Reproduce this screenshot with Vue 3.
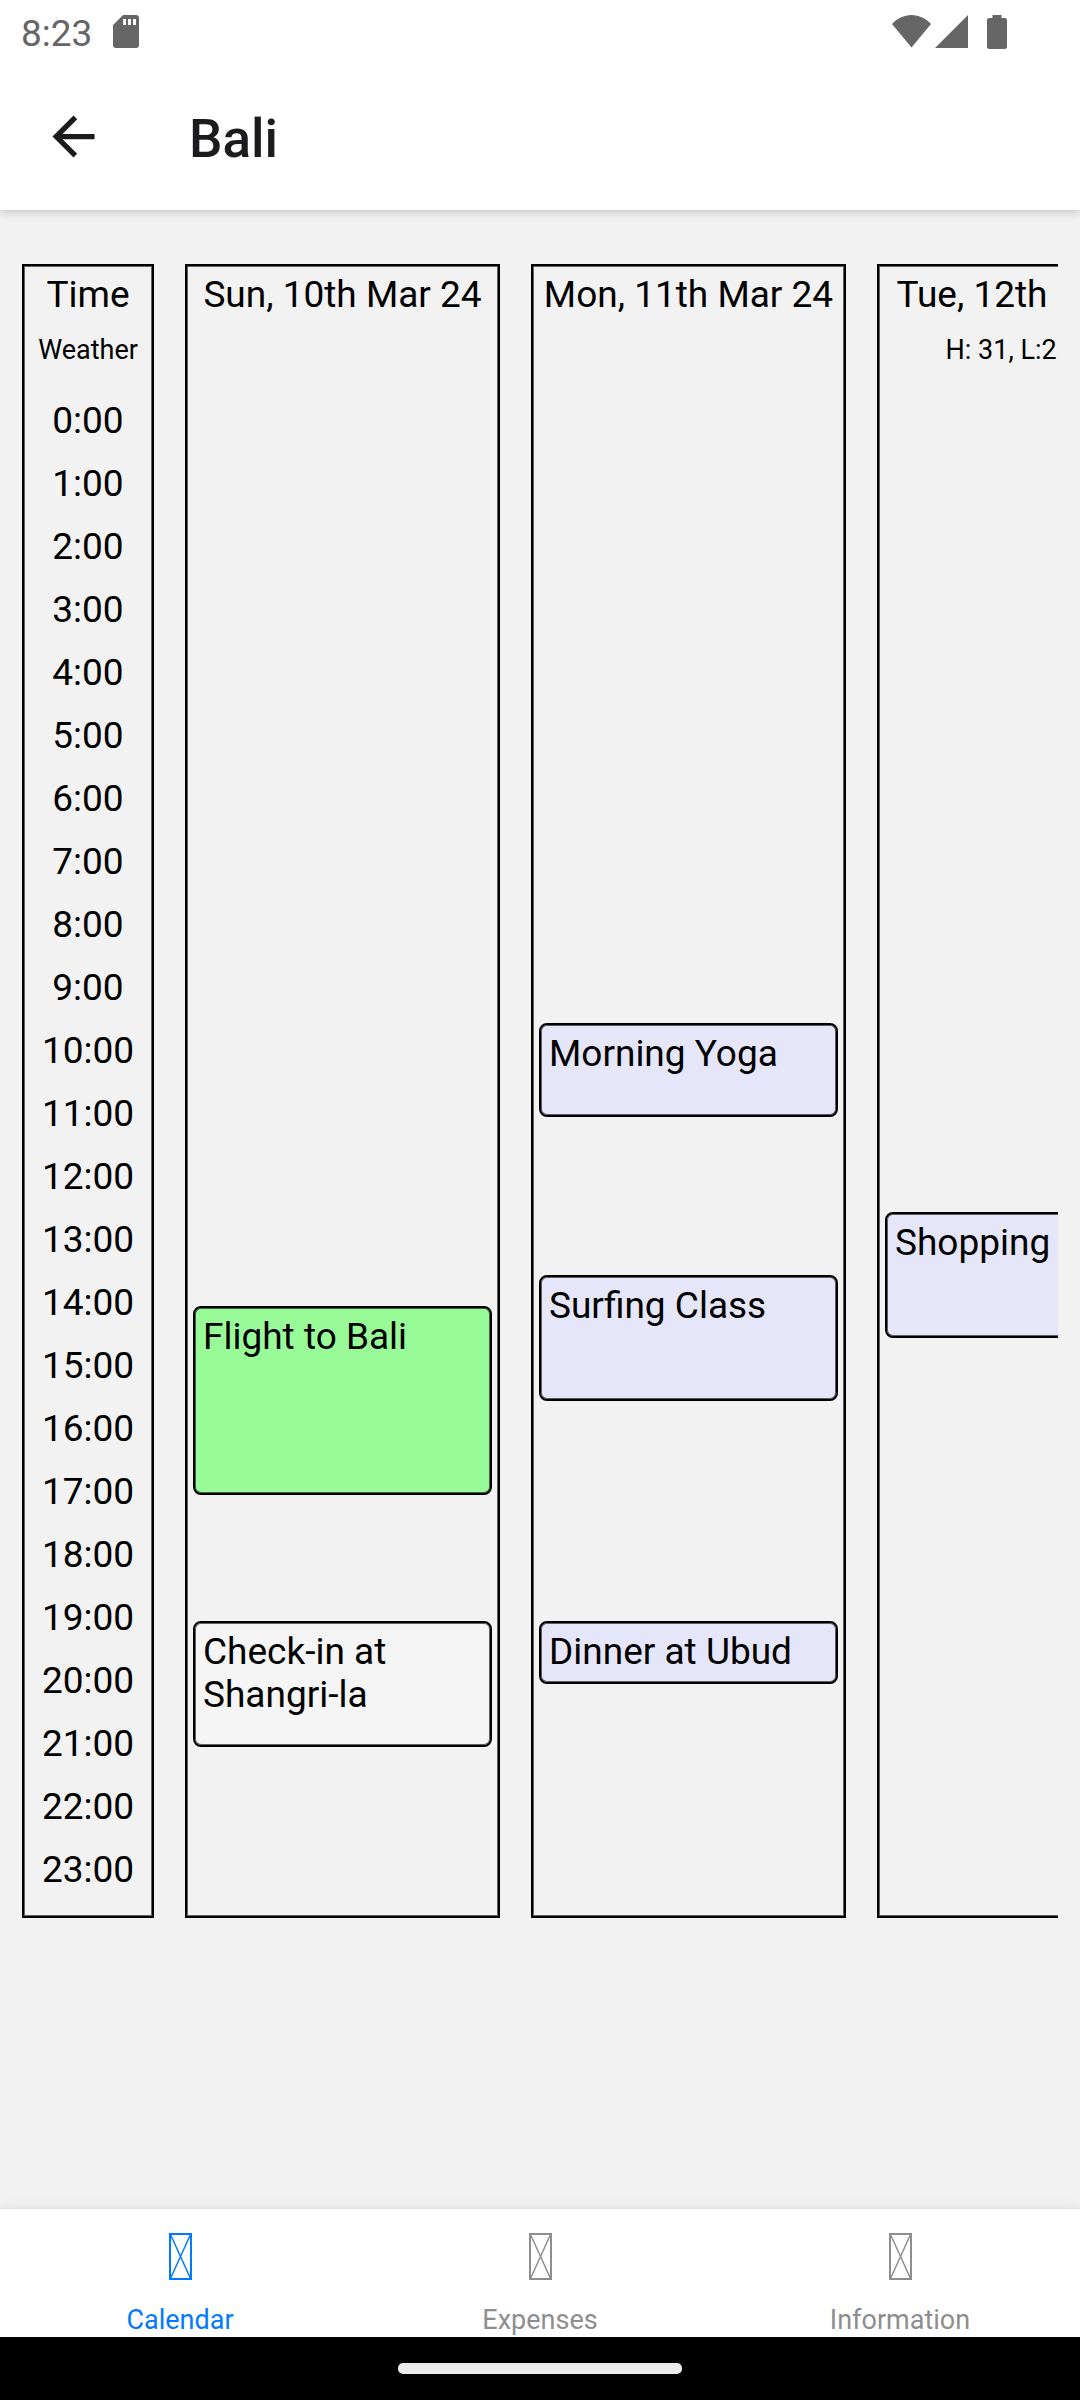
<script setup>
const hours = Array.from({ length: 24 }, (_, h) => `${h}:00`)

const days = [
  {
    title: 'Sun, 10th Mar 24',
    weather: '',
    events: [
      { name: 'Flight to Bali', start: 14, length: 3, kind: 'travel' },
      { name: 'Check-in at Shangri-la', start: 19, length: 2, kind: 'stay' },
    ],
  },
  {
    title: 'Mon, 11th Mar 24',
    weather: '',
    events: [
      { name: 'Morning Yoga', start: 9.5, length: 1.5, kind: 'activity' },
      { name: 'Surfing Class', start: 13.5, length: 2, kind: 'activity' },
      { name: 'Dinner at Ubud', start: 19, length: 1, kind: 'activity' },
    ],
  },
  {
    title: 'Tue, 12th Mar 24',
    weather: 'H: 31, L:26 Fair',
    events: [{ name: 'Shopping', start: 12.5, length: 2, kind: 'activity' }],
  },
]

const tabs = [
  { label: 'Calendar', href: '#calendar', active: true },
  { label: 'Expenses', href: '#expenses', active: false },
  { label: 'Information', href: '#information', active: false },
]

// The grid has one line per half hour.
const slot = (e) => ({ gridRow: `${e.start * 2 + 1} / span ${e.length * 2}` })
</script>

<template>
  <div class="screen">
    <header class="top">
      <div class="status">
        <span class="clock">8:23</span>
        <svg class="sd" width="26" height="33" viewBox="0 0 26 33" aria-hidden="true">
          <path fill="currentColor" fill-rule="evenodd" d="M10 0H23a3 3 0 0 1 3 3V30a3 3 0 0 1-3 3H3a3 3 0 0 1-3-3V10ZM10 4v6h3V4ZM15 4v6h3V4ZM20 4v6h3V4Z" />
        </svg>
        <div class="signals">
          <svg width="39" height="33" viewBox="0 0 39 33" aria-hidden="true">
            <path fill="currentColor" d="M19.500 32.500 0 9C5 3.500 12 0 19.500 0S34 3.500 39 9Z" />
          </svg>
          <svg width="33" height="33" viewBox="0 0 33 33" aria-hidden="true">
            <path fill="currentColor" d="M33 0V33H0Z" />
          </svg>
          <svg class="battery" width="20" height="34" viewBox="0 0 20 34" aria-hidden="true">
            <path fill="currentColor" d="M5.500 0h9v3H18a2 2 0 0 1 2 2V31.500a2.500 2.500 0 0 1-2.500 2.500H2.500A2.500 2.500 0 0 1 0 31.500V5a2 2 0 0 1 2-2H5.500Z" />
          </svg>
        </div>
      </div>
      <div class="bar">
        <button class="back" type="button" aria-label="Back">
          <svg width="63" height="63" viewBox="0 0 24 24" aria-hidden="true">
            <path fill="currentColor" d="M20 11H7.830l5.590-5.590L12 4l-8 8 8 8 1.410-1.410L7.830 13H20v-2z" />
          </svg>
        </button>
        <h1>Bali</h1>
      </div>
    </header>

    <main class="content">
      <div class="calendar">
        <section class="column times">
          <div class="head">
            <h2>Time</h2>
            <p>Weather</p>
          </div>
          <ol class="hours">
            <li v-for="h in hours" :key="h">{{ h }}</li>
          </ol>
        </section>
        <section v-for="d in days" :key="d.title" class="column day">
          <div class="head">
            <h2>{{ d.title }}</h2>
            <p>{{ d.weather }}</p>
          </div>
          <div class="events">
            <article v-for="e in d.events" :key="e.name" :class="['event', e.kind]" :style="slot(e)">
              {{ e.name }}
            </article>
          </div>
        </section>
      </div>
    </main>

    <nav class="tabs">
      <a v-for="t in tabs" :key="t.label" :href="t.href" :class="{ active: t.active }">
        <svg width="23" height="47" viewBox="0 0 23 47" fill="none" stroke="currentColor" aria-hidden="true">
          <path stroke-width="2" d="M1 1H22V46H1Z" />
          <path stroke-width="1.500" d="M1.500 1.500 21.500 45.500M21.500 1.500 1.500 45.500" />
        </svg>
        <span>{{ t.label }}</span>
      </a>
    </nav>
    <div class="gesture"><span></span></div>
  </div>
</template>

<style>
body {
  margin: 0;
}
</style>

<style scoped>
.screen {
  --hour: 63px;
  display: flex;
  flex-direction: column;
  min-height: 100vh;
  background: #f2f2f2;
  color: #000;
  font-family: Roboto, "Liberation Sans", sans-serif;
  font-size: 37px;
  line-height: 43px;
}
h1,
h2,
p,
ol {
  margin: 0;
  padding: 0;
  font-weight: 400;
}
.top {
  background: #fff;
  box-shadow: 0 1px 10px rgba(0, 0, 0, 0.24);
}
.status {
  display: flex;
  align-items: center;
  height: 63px;
  padding: 0 73px 0 21px;
  color: #666;
}
.clock {
  padding-top: 4px;
}
.sd {
  margin-left: 21px;
}
.signals {
  display: flex;
  gap: 4px;
  margin-left: auto;
}
.battery {
  margin-left: 15px;
}
.bar {
  display: flex;
  align-items: center;
  height: 147px;
  padding-left: 42px;
  color: #1c1c1e;
}
.back {
  display: flex;
  margin: 0 84px 0 0;
  padding: 0;
  border: 0;
  background: none;
  color: inherit;
}
h1 {
  padding-top: 4px;
  font-size: 53px;
  line-height: 62px;
  font-weight: 500;
}
.content {
  flex: 1;
  padding: 54px 22px;
}
.calendar {
  display: flex;
  gap: 31px;
  overflow: hidden;
}
.column {
  box-sizing: border-box;
  flex: none;
  border: 2px solid #000;
  box-shadow: inset 0 0 0 1px rgba(0, 0, 0, 0.6);
}
.times {
  width: 132px;
  padding-bottom: 15px;
}
.day {
  display: flex;
  flex-direction: column;
  width: 315px;
}
.head {
  box-sizing: border-box;
  height: 123px;
  padding-top: 7px;
  text-align: center;
  white-space: nowrap;
}
h2 {
  font-size: 37px;
}
.head p {
  margin-top: 19px;
  font-size: 27px;
  line-height: 31px;
}
.hours {
  list-style: none;
  text-align: center;
}
.hours li {
  line-height: var(--hour);
}
.events {
  display: grid;
  grid-template-rows: repeat(46, calc(var(--hour) / 2));
  padding: 35px 6px 0;
}
.event {
  box-sizing: border-box;
  padding: 7px 8px;
  border: 2px solid #000;
  border-radius: 8px;
  box-shadow: inset 0 0 0 1px rgba(0, 0, 0, 0.6);
}
.travel {
  background: #98fb98;
}
.stay {
  background: #f5f5f5;
}
.activity {
  background: #e6e6fa;
}
.tabs {
  display: flex;
  background: #fff;
  border-top: 1px solid #e0e0e0;
  box-shadow: 0 0 12px rgba(0, 0, 0, 0.08);
}
.tabs a {
  display: flex;
  flex: 1;
  flex-direction: column;
  align-items: center;
  gap: 25px;
  padding: 24px 0 1px;
  color: #8e8e8f;
  font-size: 27px;
  line-height: 31px;
  text-decoration: none;
}
.tabs a.active {
  color: #007aff;
}
.gesture {
  display: flex;
  align-items: center;
  justify-content: center;
  height: 63px;
  background: #000;
}
.gesture span {
  width: 284px;
  height: 11px;
  border-radius: 5px;
  background: #ebebeb;
}
</style>
